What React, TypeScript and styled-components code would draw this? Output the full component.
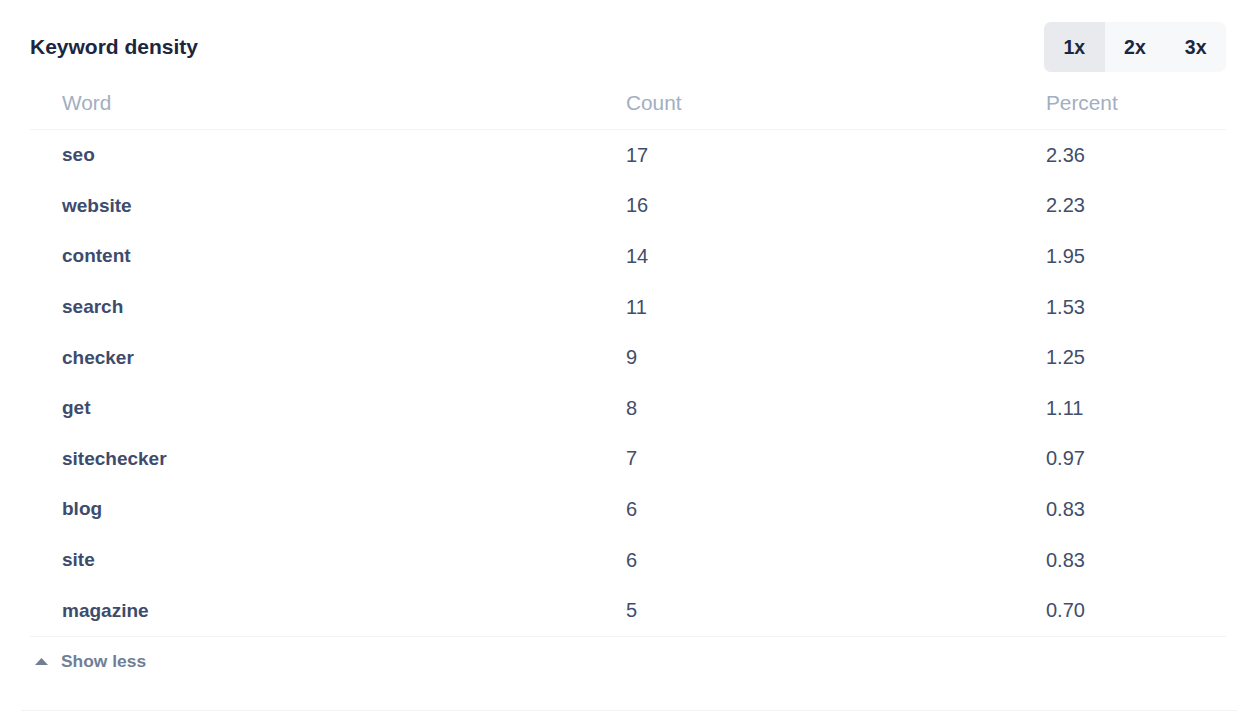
import React from "react";
import styled, { createGlobalStyle } from "styled-components";

const Global = createGlobalStyle`
  html, body { margin: 0; padding: 0; background: #ffffff; }
  body { font-family: "Liberation Sans", Arial, Helvetica, sans-serif; -webkit-font-smoothing: antialiased; }
`;

const Page = styled.div`
  padding: 0 21px;
  width: 1216px;
`;

const Card = styled.section`
  padding: 22px 11px 23px 9px;
  border-bottom: 1px solid #f1f2f4;
`;

const TitleBar = styled.div`
  display: flex;
  align-items: center;
  justify-content: space-between;
  height: 50px;
`;

const Title = styled.h2`
  margin: 0;
  font-size: 21px;
  font-weight: 700;
  color: #1c2640;
`;

const Toggle = styled.div`
  display: flex;
  background: #f7f8fa;
  border-radius: 7px;
  overflow: hidden;
  height: 50px;
`;

const ToggleButton = styled.button<{ $active?: boolean }>`
  width: 60.7px;
  border: 0;
  padding: 0;
  background: ${(p) => (p.$active ? "#e8eaee" : "transparent")};
  font-family: inherit;
  font-size: 19.5px;
  font-weight: 700;
  color: #1c2640;
  cursor: pointer;
`;

const Row = styled.div<{ $head?: boolean }>`
  display: grid;
  grid-template-columns: 564px 420px 1fr;
  align-items: center;
  height: ${(p) => (p.$head ? "58px" : "50.6px")};
  padding-top: ${(p) => (p.$head ? "4px" : "0")};
  box-sizing: border-box;
  border-bottom: ${(p) => (p.$head ? "1px solid #f1f2f4" : "0")};
`;

const Body = styled.div`
  border-bottom: 1px solid #f1f2f4;
`;

const HeadCell = styled.div`
  padding-left: 32px;
  font-size: 20.8px;
  color: #a3aec0;
`;

const WordCell = styled.div`
  padding-left: 32px;
  font-size: 19px;
  font-weight: 700;
  color: #3d4c6c;
`;

const NumCell = styled.div`
  padding-left: 32px;
  font-size: 20px;
  color: #414e6a;
`;

const Footer = styled.button`
  display: flex;
  align-items: center;
  gap: 13px;
  height: 50px;
  padding: 0 0 0 5px;
  border: 0;
  background: transparent;
  font-family: inherit;
  font-size: 17.4px;
  font-weight: 700;
  color: #707e96;
  cursor: pointer;
`;

const rows: [string, number, string][] = [
  ["seo", 17, "2.36"],
  ["website", 16, "2.23"],
  ["content", 14, "1.95"],
  ["search", 11, "1.53"],
  ["checker", 9, "1.25"],
  ["get", 8, "1.11"],
  ["sitechecker", 7, "0.97"],
  ["blog", 6, "0.83"],
  ["site", 6, "0.83"],
  ["magazine", 5, "0.70"],
];

export default function App() {
  return (
    <Page>
      <Global />
      <Card>
        <TitleBar>
          <Title>Keyword density</Title>
          <Toggle>
            <ToggleButton $active>1x</ToggleButton>
            <ToggleButton>2x</ToggleButton>
            <ToggleButton>3x</ToggleButton>
          </Toggle>
        </TitleBar>
        <Row $head>
          <HeadCell>Word</HeadCell>
          <HeadCell>Count</HeadCell>
          <HeadCell>Percent</HeadCell>
        </Row>
        <Body>
          {rows.map(([w, c, p]) => (
            <Row key={w}>
              <WordCell>{w}</WordCell>
              <NumCell>{c}</NumCell>
              <NumCell>{p}</NumCell>
            </Row>
          ))}
        </Body>
        <Footer>
          <svg width="13" height="7" viewBox="0 0 13 7">
            <path d="M6.5 0 L13 7 L0 7 Z" fill="#707e96" />
          </svg>
          Show less
        </Footer>
      </Card>
    </Page>
  );
}
